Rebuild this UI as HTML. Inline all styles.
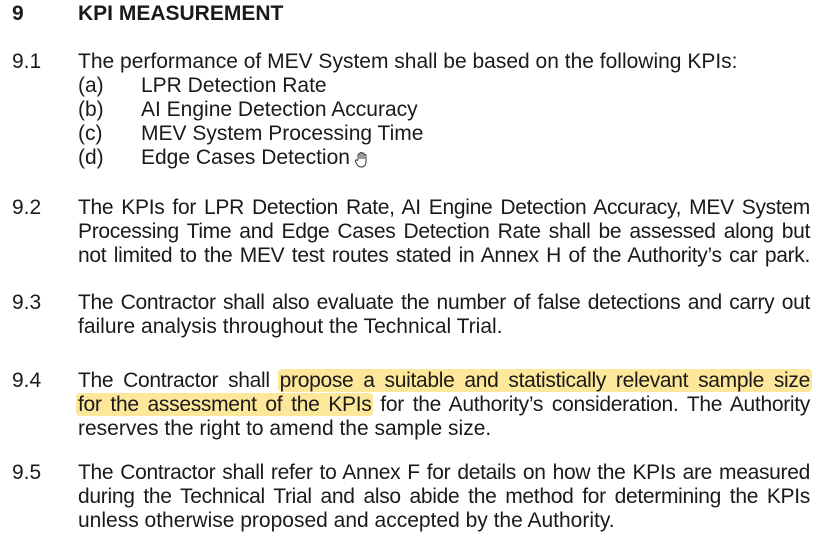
<!DOCTYPE html>
<html><head><meta charset="utf-8"><style>
body{margin:0;width:816px;height:547px;background:#fff;overflow:hidden;position:relative;font-family:"Liberation Sans",Arial,sans-serif;font-size:21px;color:#1a1a1a}
.l{position:absolute;line-height:24px;white-space:nowrap}
.j{width:732px;left:78px;text-align:justify;text-align-last:justify;white-space:normal;letter-spacing:-0.3px}
.n{left:12px}
.b{left:78px}
.s{left:141px}
.h{background:#fde79a;border-radius:4px;padding:0 2px;margin:0 -2px}
</style></head><body>
<div class="l n" style="top:2px;font-weight:bold">9</div>
<div class="l b" style="top:2px;font-weight:bold">KPI MEASUREMENT</div>

<div class="l n" style="top:50px">9.1</div>
<div class="l b" style="top:50px">The performance of MEV System shall be based on the following KPIs:</div>
<div class="l b" style="top:74px">(a)</div><div class="l s" style="top:74px">LPR Detection Rate</div>
<div class="l b" style="top:98px">(b)</div><div class="l s" style="top:98px">AI Engine Detection Accuracy</div>
<div class="l b" style="top:122px">(c)</div><div class="l s" style="top:122px">MEV System Processing Time</div>
<div class="l b" style="top:146px">(d)</div><div class="l s" style="top:146px">Edge Cases Detection</div>
<svg style="position:absolute;left:354px;top:151px" width="16" height="18" viewBox="0 0 16 18"><path d="M4 9V4a1 1 0 0 1 2 0v4V2.5a1 1 0 0 1 2 0V8V3a1 1 0 0 1 2 0v5V4.5a1 1 0 0 1 2 0V11c0 3-2 5-4.5 5S4 15 2.5 12.5L1.3 10.3a1 1 0 0 1 1.7-1z" fill="#fff" stroke="#333" stroke-width="1"/></svg>

<div class="l n" style="top:196px">9.2</div>
<div class="l j" style="top:196px">The KPIs for LPR Detection Rate, AI Engine Detection Accuracy, MEV System</div>
<div class="l j" style="top:220px">Processing Time and Edge Cases Detection Rate shall be assessed along but</div>
<div class="l j" style="top:244px">not limited to the MEV test routes stated in Annex H of the Authority’s car park.</div>

<div class="l n" style="top:291px">9.3</div>
<div class="l j" style="top:291px">The Contractor shall also evaluate the number of false detections and carry out</div>
<div class="l b" style="top:315px">failure analysis throughout the Technical Trial.</div>

<div class="l n" style="top:369px">9.4</div>
<div class="l j" style="top:369px">The Contractor shall <span class="h">propose a suitable and statistically relevant sample size</span></div>
<div class="l j" style="top:393px"><span class="h">for the assessment of the KPIs</span> for the Authority’s consideration. The Authority</div>
<div class="l b" style="top:417px">reserves the right to amend the sample size.</div>

<div class="l n" style="top:461px">9.5</div>
<div class="l j" style="top:461px">The Contractor shall refer to Annex F for details on how the KPIs are measured</div>
<div class="l j" style="top:485px">during the Technical Trial and also abide the method for determining the KPIs</div>
<div class="l b" style="top:509px">unless otherwise proposed and accepted by the Authority.</div>
</body></html>
